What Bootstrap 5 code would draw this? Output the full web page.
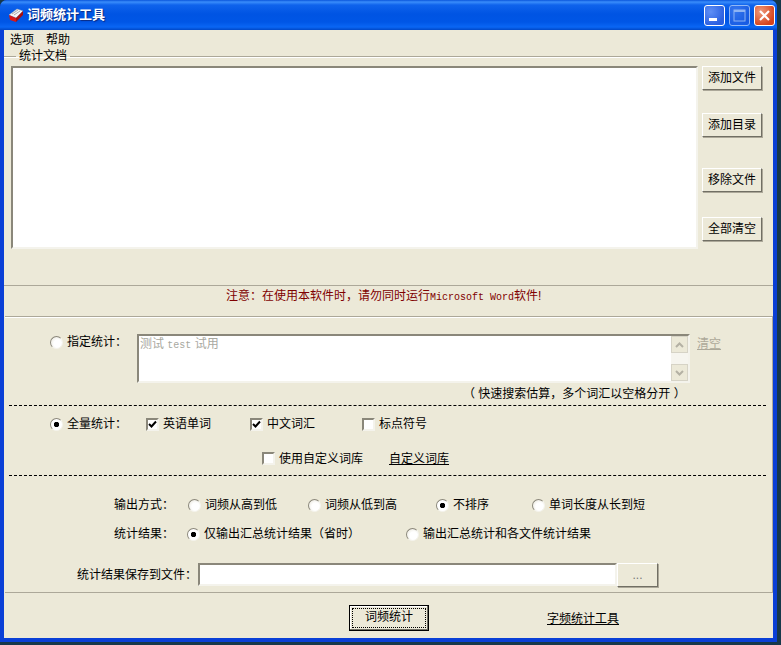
<!DOCTYPE html>
<html lang="zh-CN">
<head>
  <meta charset="UTF-8">
  <meta name="viewport" content="width=device-width, initial-scale=1.0">
  <title>词频统计工具</title>
  <link href="https://cdn.jsdelivr.net/npm/bootstrap@5.3.0/dist/css/bootstrap.min.css" rel="stylesheet">
  <script src="https://cdn.jsdelivr.net/npm/bootstrap@5.3.0/dist/js/bootstrap.bundle.min.js"></script>
  <style>
    html, body { height: 100%; }
    body { margin: 0; background: #17384a; overflow: hidden; font: 12px/16px "Liberation Sans", "Noto Sans CJK SC", sans-serif; color: #000; }
    a { color: #000; }
    .latin { font: 10px "Liberation Mono", monospace; }

    .xp-window { width: 777px; height: 642px; background: #0a3fd6; border-radius: 7px 7px 0 0; padding: 0 4px 4px; }
    .xp-title { height: 30px; margin: 0 -4px; padding: 0 2px 0 8px; border-radius: 7px 7px 0 0; color: #fff; font-size: 13px; font-weight: 700; text-shadow: 1px 1px 1px #0a2a80;
      background: linear-gradient(180deg, #0a56dc 0, #3a8dfb 2px, #0f63ec 5px, #0054e3 14px, #0056e6 22px, #0a66f4 27px, #0048c8 30px); }
    .xp-title .app-name { margin-left: 3px; }
    .win-btn { width: 21px; height: 21px; border: 1px solid #fff; border-radius: 3px; background: radial-gradient(circle at 30% 30%, #5f8ff5, #2a5fe0 75%); }
    .win-btn.off { opacity: .55; }
    .win-btn.shut { background: radial-gradient(circle at 30% 30%, #ef9a7c, #d6431c 75%); }

    .xp-body { background: #ece9d8; height: 608px; }
    .xp-menu { height: 19px; padding-left: 6px; gap: 12px; }
    .group-docs { height: 237px; margin: 0; padding: 0 11px 0 7px; border: 0; border-top: 1px solid #aca899; box-shadow: inset 0 1px 0 #fff; border-bottom: 1px solid #aca899; }
    .group-docs legend { float: none; width: auto; margin: 0 0 0 5px; padding: 0 3px; font-size: 12px; line-height: 14px; }
    .doc-list { width: 687px; height: 183px; margin-top: 3px; background: #fff; border: 2px solid; border-color: #8a877a #f4f3ec #f4f3ec #8a877a; }
    .doc-btns { margin-top: 3px; }
    .xp-btn { width: 60px; height: 24px; padding: 0; border: 1px solid; border-color: #fff #716f64 #716f64 #fff; border-radius: 0; box-shadow: 1px 1px 0 #aca899; background: #ece9d8; color: #000; font-size: 12px; line-height: 20px; }
    .btn-gap-a { margin-top: 23px; }
    .btn-gap-b { margin-top: 31px; }
    .btn-gap-c { margin-top: 25px; }

    .notice { height: 30px; color: #800000; padding-left: 222px; line-height: 20px; white-space: nowrap; }
    .panel-main { height: 277px; margin: 0 0 0 1px; border-top: 1px solid #aca899; box-shadow: inset 0 1px 0 #fff; border-bottom: 1px solid #aca899; border-right: 1px solid #aca899; }
    .row-spec { height: 69px; padding: 17px 0 0 45px; }
    .spec-label { width: 87px; margin-top: 0; }
    .spec-box { width: 553px; height: 49px; background: #fff; border: 2px solid; border-color: #8a877a #f4f3ec #f4f3ec #8a877a; }
    .spec-text { color: #a8a8a0; padding: 0 1px; }
    .spec-scroll { width: 17px; background: #f6f5ef; }
    .scroll-arrow { width: 17px; height: 17px; border: 1px solid #d6d3c6; background: #ece9d8; }
    .clear-link { margin: 2px 0 0 7px; color: #aca899; }
    .row-hint { height: 19px; padding-left: 458px; white-space: nowrap; }
    .dash-line { height: 0; margin: 0 6px 0 4px; border-top: 1px dashed #000; }
    .row-all { height: 36px; padding-left: 45px; }
    .row-custom { height: 33px; padding-left: 257px; }
    .row-sort { height: 22px; margin-top: 18px; padding-left: 109px; }
    .row-result { height: 22px; margin-top: 7px; padding-left: 109px; }
    .row-save { height: 23px; margin-top: 18px; padding-left: 72px; }
    .save-input { width: 419px; height: 23px; background: #fff; border: 2px solid; border-color: #8a877a #f4f3ec #f4f3ec #8a877a; }
    .pick-btn { width: 41px; height: 24px; line-height: 16px; color: #777; }

    .xp-opt { gap: 4px; flex: none; }
    .xp-radio, .xp-check { appearance: none; flex: none; margin: 0; width: 13px; height: 13px; background-color: #fff; }
    .xp-radio { border-radius: 50%; border: 1px solid; border-color: #8a877a #f4f3ec #f4f3ec #8a877a; background-image: radial-gradient(circle at 60% 60%, #fff 40%, #e4e1d4 100%); }
    .xp-radio:checked { background-image: radial-gradient(circle, #000 2.4px, #fff 3px); }
    .xp-check { border: 2px solid; border-color: #8a877a #f4f3ec #f4f3ec #8a877a; }
    .xp-check:checked { background: #fff url("data:image/svg+xml,%3Csvg xmlns='http://www.w3.org/2000/svg' viewBox='0 0 9 9'%3E%3Cpath d='M1 4l2.500 2.500L8 1.500' fill='none' stroke='%23000' stroke-width='2'/%3E%3C/svg%3E") center/9px no-repeat; }
    .wd-41 { width: 41px; } .wd-73 { width: 73px; } .wd-74 { width: 74px; } .wd-96 { width: 96px; }
    .wd-104 { width: 104px; } .wd-112 { width: 112px; } .wd-120 { width: 120px; } .wd-121 { width: 121px; }
    .wd-127 { width: 127px; } .wd-128 { width: 128px; } .wd-219 { width: 219px; }

    .xp-foot { height: 50px; padding-left: 345px; padding-top: 12px; }
    .run-btn { width: 80px; height: 26px; padding: 2px; border: 1px solid #000; border-radius: 0; background: #ece9d8; box-shadow: inset -1px -1px 0 #716f64, inset 1px 1px 0 #fff; color: #000; font-size: 12px; }
    .run-btn span { display: block; height: 100%; line-height: 18px; outline: 1px dotted #000; outline-offset: -1px; }
    .char-link { margin: 6px 0 0 118px; }
  </style>
</head>
<body>
  <div class="xp-window">
    <!-- title bar -->
    <div class="xp-title d-flex align-items-center">
      <svg width="16" height="16" viewBox="0 0 16 16">
        <path d="M1 8 L9 2 L15 4 L8 11 Z" fill="#f4f4f4" stroke="#b0b0b0" stroke-width=".5"/>
        <path d="M1 8 L8 11 L8 15 L2 13 Z" fill="#d81818"/>
        <path d="M8 11 L15 4 L15 8 L8 15 Z" fill="#a80f0f"/>
        <path d="M4 7 L10 3 M6 8 L12 4" stroke="#888" stroke-width=".7"/>
      </svg>
      <span class="app-name">词频统计工具</span>
      <div class="ms-auto d-flex gap-1 align-items-center">
        <div class="win-btn d-flex align-items-end p-1">
          <svg width="9" height="4" viewBox="0 0 9 4"><rect width="8" height="3" y="1" fill="#fff"/></svg>
        </div>
        <div class="win-btn off d-flex align-items-center justify-content-center">
          <svg width="13" height="13" viewBox="0 0 13 13"><rect x="1" y="1" width="11" height="11" fill="none" stroke="#fff"/><rect x="1" y="1" width="11" height="2" fill="#fff"/></svg>
        </div>
        <div class="win-btn shut d-flex align-items-center justify-content-center">
          <svg width="13" height="13" viewBox="0 0 13 13"><path d="M2 2 L11 11 M11 2 L2 11" stroke="#fff" stroke-width="2.200"/></svg>
        </div>
      </div>
    </div>

    <div class="xp-body">
      <div class="xp-menu d-flex align-items-center">
        <span>选项</span>
        <span>帮助</span>
      </div>

      <fieldset class="group-docs">
        <legend>统计文档</legend>
        <div class="d-flex justify-content-between">
          <div class="doc-list"></div>
          <div class="doc-btns d-flex flex-column">
            <button type="button" class="btn xp-btn">添加文件</button>
            <button type="button" class="btn xp-btn btn-gap-a">添加目录</button>
            <button type="button" class="btn xp-btn btn-gap-b">移除文件</button>
            <button type="button" class="btn xp-btn btn-gap-c">全部清空</button>
          </div>
        </div>
      </fieldset>

      <div class="notice">注意：在使用本软件时，请勿同时运行<span class="latin">Microsoft Word</span>软件!</div>

      <div class="panel-main">
        <div class="row-spec d-flex">
          <label class="spec-label xp-opt d-flex align-items-center align-self-start">
            <input type="radio" class="xp-radio" name="mode">
            <span>指定统计：</span>
          </label>
          <div class="spec-box d-flex justify-content-between">
            <div class="spec-text">测试 <span class="latin">test</span> 试用</div>
            <div class="spec-scroll d-flex flex-column justify-content-between">
              <div class="scroll-arrow d-flex align-items-center justify-content-center">
                <svg width="9" height="6" viewBox="0 0 9 6"><path d="M1 5 L4.500 1.500 L8 5" fill="none" stroke="#b4b1a4" stroke-width="2"/></svg>
              </div>
              <div class="scroll-arrow d-flex align-items-center justify-content-center">
                <svg width="9" height="6" viewBox="0 0 9 6"><path d="M1 1 L4.500 4.500 L8 1" fill="none" stroke="#b4b1a4" stroke-width="2"/></svg>
              </div>
            </div>
          </div>
          <a href="#" class="clear-link">清空</a>
        </div>
        <div class="row-hint">（ 快速搜索估算，多个词汇以空格分开 ）</div>
        <div class="dash-line"></div>

        <div class="row-all d-flex align-items-center">
          <label class="wd-96 xp-opt d-flex align-items-center">
            <input type="radio" class="xp-radio" name="mode" checked>
            <span>全量统计：</span>
          </label>
          <label class="wd-104 xp-opt d-flex align-items-center">
            <input type="checkbox" class="xp-check" checked>
            <span>英语单词</span>
          </label>
          <label class="wd-112 xp-opt d-flex align-items-center">
            <input type="checkbox" class="xp-check" checked>
            <span>中文词汇</span>
          </label>
          <label class="xp-opt d-flex align-items-center">
            <input type="checkbox" class="xp-check">
            <span>标点符号</span>
          </label>
        </div>
        <div class="row-custom d-flex align-items-center">
          <label class="wd-127 xp-opt d-flex align-items-center">
            <input type="checkbox" class="xp-check">
            <span>使用自定义词库</span>
          </label>
          <a href="#">自定义词库</a>
        </div>
        <div class="dash-line"></div>

        <div class="row-sort d-flex align-items-center">
          <span class="wd-74">输出方式：</span>
          <label class="wd-120 xp-opt d-flex align-items-center">
            <input type="radio" class="xp-radio" name="sort">
            <span>词频从高到低</span>
          </label>
          <label class="wd-128 xp-opt d-flex align-items-center">
            <input type="radio" class="xp-radio" name="sort">
            <span>词频从低到高</span>
          </label>
          <label class="wd-96 xp-opt d-flex align-items-center">
            <input type="radio" class="xp-radio" name="sort" checked>
            <span>不排序</span>
          </label>
          <label class="xp-opt d-flex align-items-center">
            <input type="radio" class="xp-radio" name="sort">
            <span>单词长度从长到短</span>
          </label>
        </div>
        <div class="row-result d-flex align-items-center">
          <span class="wd-73">统计结果：</span>
          <label class="wd-219 xp-opt d-flex align-items-center">
            <input type="radio" class="xp-radio" name="result" checked>
            <span>仅输出汇总统计结果（省时）</span>
          </label>
          <label class="xp-opt d-flex align-items-center">
            <input type="radio" class="xp-radio" name="result">
            <span>输出汇总统计和各文件统计结果</span>
          </label>
        </div>
        <div class="row-save d-flex align-items-center">
          <span class="wd-121">统计结果保存到文件：</span>
          <div class="save-input"></div>
          <button type="button" class="btn xp-btn pick-btn">...</button>
        </div>
      </div>

      <div class="xp-foot d-flex align-items-start">
        <button type="button" class="btn run-btn"><span>词频统计</span></button>
        <a href="#" class="char-link">字频统计工具</a>
      </div>
    </div>
  </div>
</body>
</html>
